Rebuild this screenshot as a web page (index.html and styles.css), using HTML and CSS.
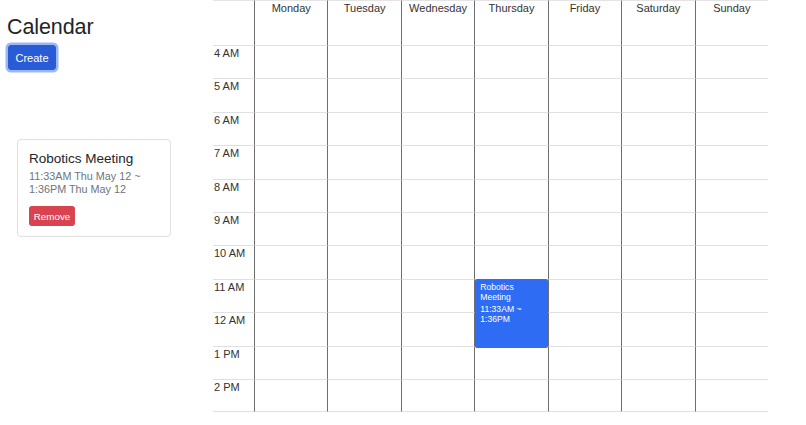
FILE: index.html
```html
<!DOCTYPE html>
<html>
<head>
<meta charset="utf-8">
<link rel="stylesheet" href="styles.css">
</head>
<body>
<div class="app">
  <aside class="side">
    <h1 class="title">Calendar</h1>
    <button class="btn-create">Create</button>
    <div class="card">
      <div class="card-title">Robotics Meeting</div>
      <div class="card-time">11:33AM Thu May 12 ~<br>1:36PM Thu May 12</div>
      <button class="btn-remove">Remove</button>
    </div>
  </aside>
  <main class="grid">
    <div class="hd corner"></div>
    <div class="hd day">Monday</div>
    <div class="hd day">Tuesday</div>
    <div class="hd day">Wednesday</div>
    <div class="hd day">Thursday</div>
    <div class="hd day">Friday</div>
    <div class="hd day">Saturday</div>
    <div class="hd day">Sunday</div>

    <div class="time">4 AM</div><div class="slot"></div><div class="slot"></div><div class="slot"></div><div class="slot"></div><div class="slot"></div><div class="slot"></div><div class="slot"></div>
    <div class="time">5 AM</div><div class="slot"></div><div class="slot"></div><div class="slot"></div><div class="slot"></div><div class="slot"></div><div class="slot"></div><div class="slot"></div>
    <div class="time">6 AM</div><div class="slot"></div><div class="slot"></div><div class="slot"></div><div class="slot"></div><div class="slot"></div><div class="slot"></div><div class="slot"></div>
    <div class="time">7 AM</div><div class="slot"></div><div class="slot"></div><div class="slot"></div><div class="slot"></div><div class="slot"></div><div class="slot"></div><div class="slot"></div>
    <div class="time">8 AM</div><div class="slot"></div><div class="slot"></div><div class="slot"></div><div class="slot"></div><div class="slot"></div><div class="slot"></div><div class="slot"></div>
    <div class="time">9 AM</div><div class="slot"></div><div class="slot"></div><div class="slot"></div><div class="slot"></div><div class="slot"></div><div class="slot"></div><div class="slot"></div>
    <div class="time">10 AM</div><div class="slot"></div><div class="slot"></div><div class="slot"></div><div class="slot"></div><div class="slot"></div><div class="slot"></div><div class="slot"></div>
    <div class="time">11 AM</div><div class="slot"></div><div class="slot"></div><div class="slot"></div><div class="slot has-event"><div class="event"><div class="ev-title">Robotics<br>Meeting</div><div class="ev-time">11:33AM ~<br>1:36PM</div></div></div><div class="slot"></div><div class="slot"></div><div class="slot"></div>
    <div class="time">12 AM</div><div class="slot"></div><div class="slot"></div><div class="slot"></div><div class="slot"></div><div class="slot"></div><div class="slot"></div><div class="slot"></div>
    <div class="time">1 PM</div><div class="slot"></div><div class="slot"></div><div class="slot"></div><div class="slot"></div><div class="slot"></div><div class="slot"></div><div class="slot"></div>
    <div class="time last">2 PM</div><div class="slot last"></div><div class="slot last"></div><div class="slot last"></div><div class="slot last"></div><div class="slot last"></div><div class="slot last"></div><div class="slot last"></div>
  </main>
</div>
</body>
</html>
```

FILE: styles.css
```css
* { box-sizing: border-box; }
html, body { margin: 0; padding: 0; background: #fff; }
body {
  font-family: "Liberation Sans", Arial, sans-serif;
  color: #212529;
}
.app {
  display: flex;
  align-items: flex-start;
}
.side {
  width: 213px;
  flex: none;
  padding-left: 7px;
}
.title {
  margin: 14px 0 0 0;
  font-size: 21.5px;
  font-weight: 400;
  line-height: 26px;
  letter-spacing: -0.1px;
}
.btn-create {
  display: block;
  margin: 5px 0 0 1px;
  width: 48px;
  height: 25px;
  padding: 0;
  border: 1px solid #2a5bd7;
  border-radius: 3px;
  background: #2a5bd7;
  color: #fff;
  font-family: inherit;
  font-size: 11px;
  box-shadow: 0 0 0 2.5px #9bb8f5;
}
.card {
  margin: 69px 0 0 10px;
  width: 154px;
  height: 98px;
  border: 1px solid #e0e0e0;
  border-radius: 4px;
  padding: 10px 11px;
}
.card-title {
  font-size: 13.5px;
  line-height: 17px;
}
.card-time {
  margin-top: 3px;
  font-size: 10.8px;
  line-height: 12.5px;
  color: #6c757d;
}
.btn-remove {
  display: block;
  margin-top: 11px;
  width: 46px;
  height: 20px;
  padding: 0;
  border: none;
  border-radius: 3px;
  background: #d9434f;
  color: #fff;
  font-family: inherit;
  font-size: 9.8px;
}
.grid {
  width: 555px;
  flex: none;
  display: grid;
  grid-template-columns: 41px repeat(7, 1fr);
  grid-template-rows: 45px repeat(11, 33.4px);
}
.hd {
  border-top: 1px solid #e4e4e4;
  font-size: 11px;
  color: #333;
  text-align: center;
  padding-top: 1px;
}
.day, .slot {
  border-left: 1px solid #6e6e6e;
}
.time, .slot {
  border-top: 1px solid #e0e0e0;
}
.time {
  font-size: 11px;
  color: #333;
  padding: 1px 0 0 1px;
}
.last { border-bottom: 1px solid #e0e0e0; }
.has-event { position: relative; }
.event {
  position: absolute;
  left: 0;
  top: -1px;
  width: 73px;
  height: 69px;
  z-index: 2;
  background: #2e6cf4;
  border-radius: 2px;
  color: #fff;
  padding: 3px 5px;
  font-size: 8.6px;
  line-height: 10px;
}
.ev-time { margin-top: 2px; }
```
